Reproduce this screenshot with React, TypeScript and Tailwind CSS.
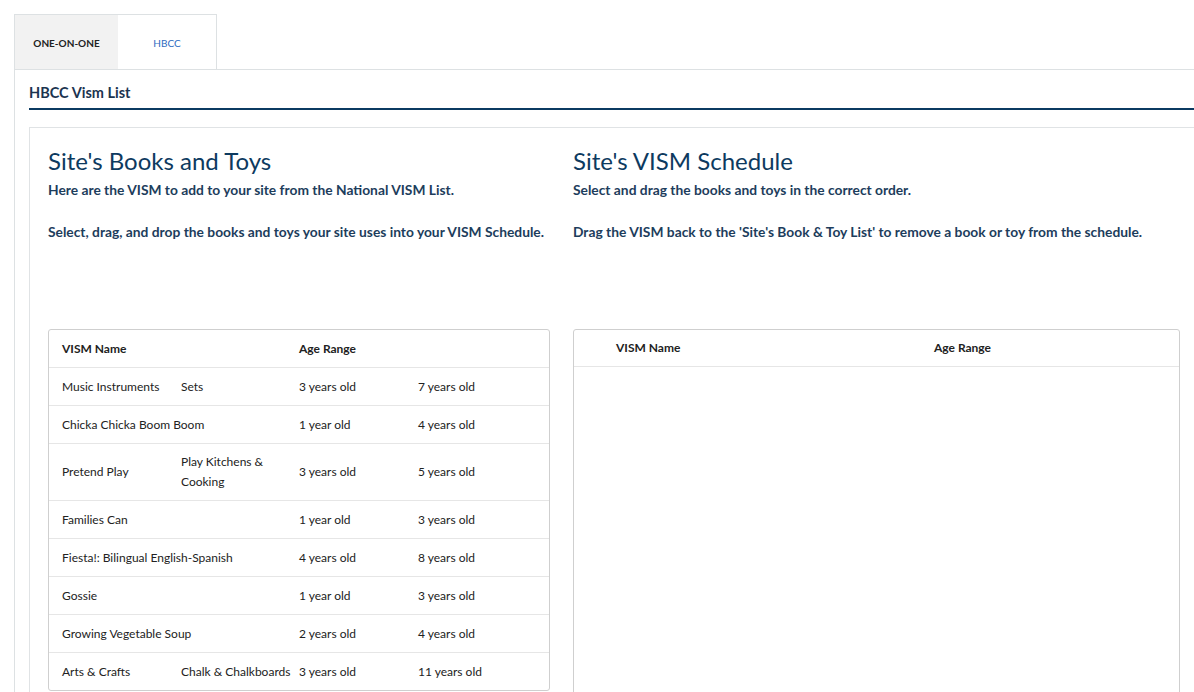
import React from 'react';

interface Vism {
  name: string;
  sub?: string;
  from: string;
  to: string;
}

const siteList: Vism[] = [
  { name: 'Music Instruments', sub: 'Sets', from: '3 years old', to: '7 years old' },
  { name: 'Chicka Chicka Boom Boom', from: '1 year old', to: '4 years old' },
  { name: 'Pretend Play', sub: 'Play Kitchens & Cooking', from: '3 years old', to: '5 years old' },
  { name: 'Families Can', from: '1 year old', to: '3 years old' },
  { name: 'Fiesta!: Bilingual English-Spanish', from: '4 years old', to: '8 years old' },
  { name: 'Gossie', from: '1 year old', to: '3 years old' },
  { name: 'Growing Vegetable Soup', from: '2 years old', to: '4 years old' },
  { name: 'Arts & Crafts', sub: 'Chalk & Chalkboards', from: '3 years old', to: '11 years old' },
];

const font = { fontFamily: 'Lato, "Open Sans", sans-serif' };

function VismRow({ item }: { item: Vism }) {
  // long names spill across the sub column, like the real table
  return (
    <div className="grid grid-cols-[119px_118px_119px_1fr] items-center border-t border-[#e6e6e6] min-h-[38px] py-[8px] px-[13px] text-[12px] leading-[20px] text-[#222]">
      <div className={item.sub ? '' : 'col-span-2'}>{item.name}</div>
      {item.sub && <div className="pr-2">{item.sub}</div>}
      <div>{item.from}</div>
      <div>{item.to}</div>
    </div>
  );
}

export default function App() {
  return (
    <div className="min-h-screen bg-white pl-[14px] pt-[14px] text-[#1d3d5c]" style={font}>
      {/* Tabs */}
      <div className="flex w-[203px] h-[55px] border border-b-0 border-[#dde1e3]">
        <div className="w-[103px] bg-[#f2f2f2] flex items-center justify-center pt-[2px] text-[10px] font-bold text-[#222]">
          ONE-ON-ONE
        </div>
        <div className="flex-1 flex items-center justify-center pt-[2px] text-[10px] text-[#2d6bbf]">HBCC</div>
      </div>

      {/* Panel */}
      <div className="border-l border-t border-[#dde1e3] pl-[14px] pb-10">
        <div className="h-[40px] flex items-end pb-[4px] border-b-2 border-[#0b3a61]">
          <h2 className="text-[14.5px] font-bold text-[#1b3450]">HBCC Vism List</h2>
        </div>

        <div className="mt-[17px] border-l border-t border-[#e0e3e5] pl-[18px] pt-[18px]">
          <div className="flex gap-[23px]">
            {/* Left column */}
            <div className="w-[502px] shrink-0">
              <div className="h-[183px]">
                <h1 className="text-[24px] leading-[30px] text-[#0d3a5f]">Site's Books and Toys</h1>
                <p className="mt-[4px] text-[13.8px] font-bold leading-[20px]">
                  Here are the VISM to add to your site from the National VISM List.
                </p>
                <p className="mt-[22px] text-[13.8px] font-bold leading-[20px] whitespace-nowrap">
                  Select, drag, and drop the books and toys your site uses into your VISM Schedule.
                </p>
              </div>
              <div className="border border-[#cfcfcf] rounded-[3px] overflow-hidden">
                <div className="grid grid-cols-[237px_1fr] items-center h-[37px] px-[13px] text-[12px] font-bold text-[#222]">
                  <div>VISM Name</div>
                  <div>Age Range</div>
                </div>
                {siteList.map((item) => (
                  <VismRow key={item.name} item={item} />
                ))}
              </div>
            </div>

            {/* Right column */}
            <div className="w-[607px] shrink-0">
              <div className="h-[183px]">
                <h1 className="text-[24px] leading-[30px] text-[#0d3a5f]">Site's VISM Schedule</h1>
                <p className="mt-[4px] text-[13.8px] font-bold leading-[20px]">
                  Select and drag the books and toys in the correct order.
                </p>
                <p className="mt-[22px] text-[13.8px] font-bold leading-[20px] whitespace-nowrap">
                  Drag the VISM back to the 'Site's Book &amp; Toy List' to remove a book or toy from the schedule.
                </p>
              </div>
              <div className="border border-[#cfcfcf] rounded-[3px] h-[420px]">
                <div className="grid grid-cols-[318px_1fr] items-center h-[37px] pl-[42px] border-b border-[#e6e6e6] text-[12px] font-bold text-[#222]">
                  <div>VISM Name</div>
                  <div>Age Range</div>
                </div>
              </div>
            </div>
          </div>
        </div>
      </div>
    </div>
  );
}
